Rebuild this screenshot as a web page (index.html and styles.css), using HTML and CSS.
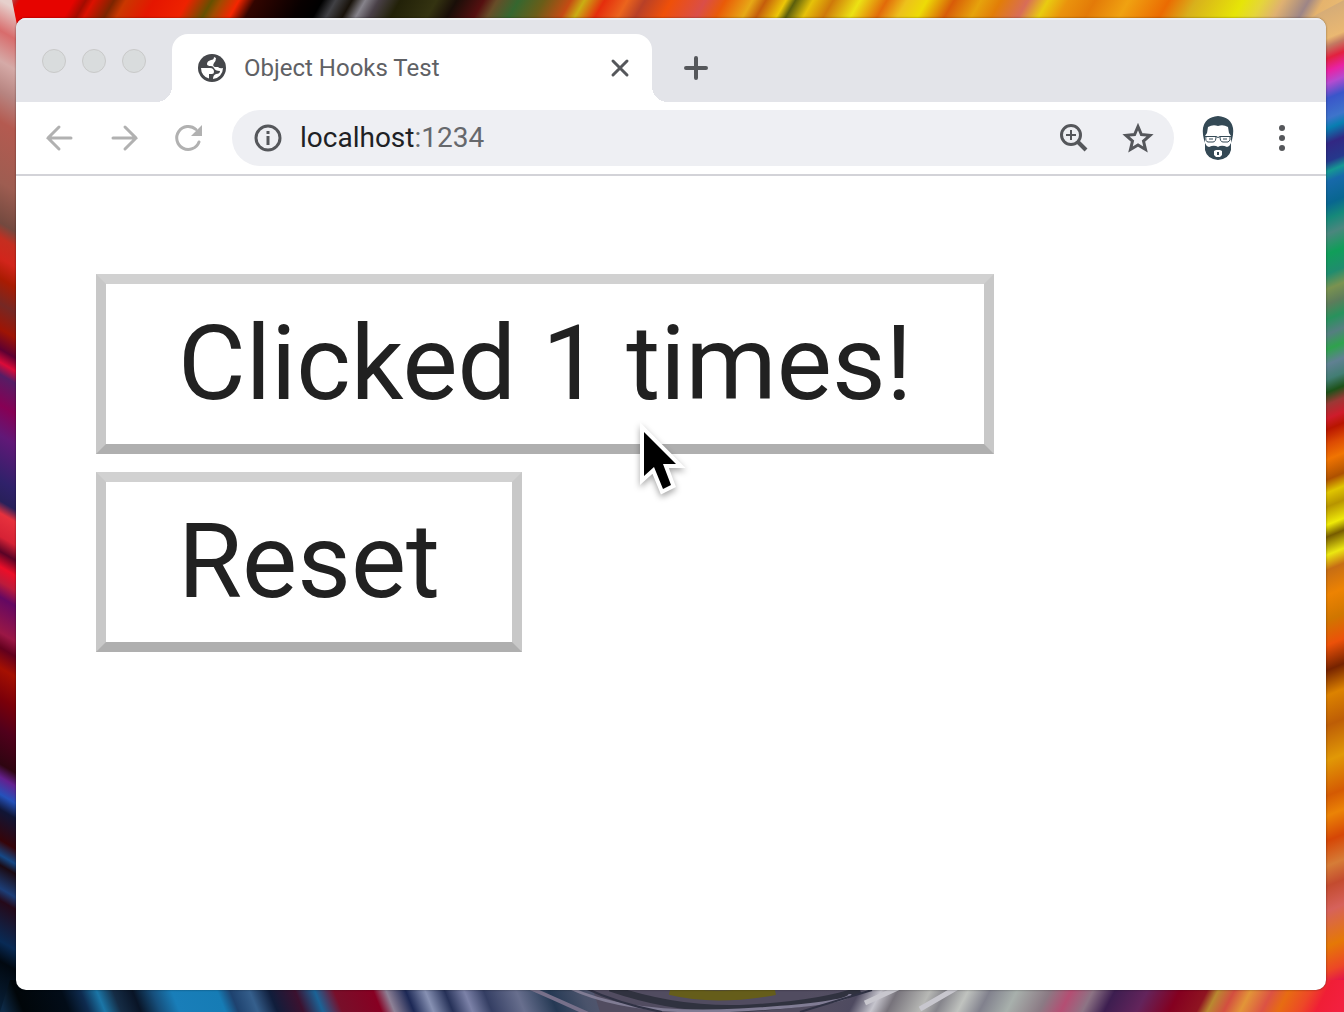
FILE: index.html
```html
<!DOCTYPE html>
<html lang="en">
<head>
<meta charset="utf-8">
<meta name="viewport" content="width=device-width, initial-scale=1">
<title>Object Hooks Test</title>
<link rel="stylesheet" href="styles.css">
</head>
<body>
<div class="desktop">
  <svg class="wallpaper" viewBox="0 0 1344 1012" preserveAspectRatio="none" aria-hidden="true">
    <defs>
      <linearGradient id="top" gradientUnits="userSpaceOnUse" x1="0" y1="0" x2="1008" y2="582">
        <stop offset="0" stop-color="#d8b5b5"/><stop offset=".012" stop-color="#c52020"/>
        <stop offset=".015" stop-color="#e60400"/><stop offset=".055" stop-color="#e60400"/>
        <stop offset=".064" stop-color="#a30c00"/><stop offset=".07" stop-color="#dc1100"/>
        <stop offset=".085" stop-color="#7c2500"/><stop offset=".094" stop-color="#ca3700"/>
        <stop offset=".115" stop-color="#e51600"/><stop offset=".14" stop-color="#ee2200"/>
        <stop offset=".158" stop-color="#655000"/><stop offset=".165" stop-color="#a04b00"/>
        <stop offset=".178" stop-color="#f52600"/><stop offset=".19" stop-color="#320500"/>
        <stop offset=".225" stop-color="#080000"/><stop offset=".24" stop-color="#000"/>
        <stop offset=".25" stop-color="#414145"/><stop offset=".262" stop-color="#18120a"/>
        <stop offset=".272" stop-color="#86838b"/><stop offset=".282" stop-color="#494047"/>
        <stop offset=".298" stop-color="#222108"/><stop offset=".325" stop-color="#343311"/>
        <stop offset=".34" stop-color="#190e08"/><stop offset=".36" stop-color="#551010"/>
        <stop offset=".37" stop-color="#674d28"/><stop offset=".386" stop-color="#35672f"/>
        <stop offset=".405" stop-color="#6b5d18"/><stop offset=".425" stop-color="#c64b13"/>
        <stop offset=".435" stop-color="#caae13"/><stop offset=".45" stop-color="#e52e0c"/>
        <stop offset=".467" stop-color="#eb641d"/><stop offset=".48" stop-color="#b84027"/>
        <stop offset=".5" stop-color="#ef5009"/><stop offset=".525" stop-color="#da4e48"/>
        <stop offset=".54" stop-color="#e95b08"/><stop offset=".56" stop-color="#e7a916"/>
        <stop offset=".57" stop-color="#c55d0b"/><stop offset=".585" stop-color="#edc708"/>
        <stop offset=".592" stop-color="#5b5e0c"/><stop offset=".605" stop-color="#e6c209"/>
        <stop offset=".62" stop-color="#cf790a"/><stop offset=".64" stop-color="#ece214"/>
        <stop offset=".66" stop-color="#e26a0a"/><stop offset=".675" stop-color="#edc11b"/>
        <stop offset=".69" stop-color="#eddb06"/><stop offset=".71" stop-color="#d85c08"/>
        <stop offset=".73" stop-color="#e6a30c"/><stop offset=".745" stop-color="#e27d08"/>
        <stop offset=".765" stop-color="#d86d58"/><stop offset=".78" stop-color="#e9cc10"/>
        <stop offset=".795" stop-color="#ea930d"/><stop offset=".815" stop-color="#e37a08"/>
        <stop offset=".84" stop-color="#f0a211"/><stop offset=".87" stop-color="#eb6b02"/>
        <stop offset=".89" stop-color="#d8b01c"/><stop offset=".925" stop-color="#e6e507"/>
        <stop offset=".94" stop-color="#e5d53b"/><stop offset=".955" stop-color="#dfb171"/>
        <stop offset=".974" stop-color="#9d8586"/><stop offset=".985" stop-color="#e5b36d"/>
        <stop offset="1" stop-color="#e8b972"/>
      </linearGradient>
      <linearGradient id="left" gradientUnits="userSpaceOnUse" x1="0" y1="0" x2="-438" y2="759">
        <stop offset="0" stop-color="#e6d0cc"/><stop offset=".03" stop-color="#d86c6c"/>
        <stop offset=".06" stop-color="#d5aaa7"/><stop offset=".09" stop-color="#b78480"/>
        <stop offset=".12" stop-color="#b45a50"/><stop offset=".18" stop-color="#9e5d51"/>
        <stop offset=".22" stop-color="#73493f"/><stop offset=".235" stop-color="#c52e20"/>
        <stop offset=".255" stop-color="#d2251b"/><stop offset=".275" stop-color="#a91b02"/>
        <stop offset=".3" stop-color="#752824"/><stop offset=".325" stop-color="#9f1404"/>
        <stop offset=".345" stop-color="#5d0032"/><stop offset=".358" stop-color="#db0b38"/>
        <stop offset=".37" stop-color="#551d65"/><stop offset=".4" stop-color="#870054"/>
        <stop offset=".43" stop-color="#611877"/><stop offset=".475" stop-color="#2f216a"/>
        <stop offset=".495" stop-color="#28205a"/><stop offset=".507" stop-color="#e7313d"/>
        <stop offset=".53" stop-color="#d62235"/><stop offset=".545" stop-color="#5a0326"/>
        <stop offset=".56" stop-color="#ec0e28"/><stop offset=".575" stop-color="#bd1b3b"/>
        <stop offset=".59" stop-color="#640862"/><stop offset=".625" stop-color="#9b1745"/>
        <stop offset=".64" stop-color="#62001d"/><stop offset=".66" stop-color="#a51002"/>
        <stop offset=".69" stop-color="#7b0009"/><stop offset=".72" stop-color="#51001b"/>
        <stop offset=".755" stop-color="#2e0511"/><stop offset=".768" stop-color="#64208f"/>
        <stop offset=".785" stop-color="#2452bb"/><stop offset=".8" stop-color="#101535"/>
        <stop offset=".83" stop-color="#360409"/><stop offset=".845" stop-color="#154886"/>
        <stop offset=".855" stop-color="#1b0a12"/><stop offset=".878" stop-color="#1c3e78"/>
        <stop offset=".89" stop-color="#250919"/><stop offset=".93" stop-color="#082a55"/>
        <stop offset=".95" stop-color="#010810"/><stop offset="1" stop-color="#08213a"/>
      </linearGradient>
      <linearGradient id="right" gradientUnits="userSpaceOnUse" x1="1335" y1="0" x2="1690" y2="856">
        <stop offset="0" stop-color="#d2aa78"/><stop offset=".035" stop-color="#eab872"/>
        <stop offset=".043" stop-color="#c37a62"/><stop offset=".055" stop-color="#e2213f"/>
        <stop offset=".068" stop-color="#e822a4"/><stop offset=".08" stop-color="#b44bd0"/>
        <stop offset=".095" stop-color="#3a55ca"/><stop offset=".115" stop-color="#3e74cb"/>
        <stop offset=".125" stop-color="#087eb1"/><stop offset=".14" stop-color="#322783"/>
        <stop offset=".158" stop-color="#25388c"/><stop offset=".168" stop-color="#159893"/>
        <stop offset=".178" stop-color="#1769aa"/><stop offset=".2" stop-color="#086690"/>
        <stop offset=".215" stop-color="#168979"/><stop offset=".23" stop-color="#4b867e"/>
        <stop offset=".25" stop-color="#109e59"/><stop offset=".27" stop-color="#208c6e"/>
        <stop offset=".285" stop-color="#7a9250"/><stop offset=".3" stop-color="#5d7c5b"/>
        <stop offset=".315" stop-color="#28925c"/><stop offset=".33" stop-color="#557e80"/>
        <stop offset=".345" stop-color="#2fa24d"/><stop offset=".36" stop-color="#608092"/>
        <stop offset=".375" stop-color="#427d73"/><stop offset=".388" stop-color="#1d5118"/>
        <stop offset=".4" stop-color="#9b3835"/><stop offset=".414" stop-color="#ce1c2b"/>
        <stop offset=".425" stop-color="#b81500"/><stop offset=".44" stop-color="#dc4b03"/>
        <stop offset=".455" stop-color="#f07402"/><stop offset=".475" stop-color="#ae5100"/>
        <stop offset=".488" stop-color="#e0c500"/><stop offset=".502" stop-color="#b79400"/>
        <stop offset=".52" stop-color="#efea08"/><stop offset=".532" stop-color="#775c00"/>
        <stop offset=".55" stop-color="#ece711"/><stop offset=".565" stop-color="#c66d14"/>
        <stop offset=".59" stop-color="#ed8302"/><stop offset=".615" stop-color="#d07600"/>
        <stop offset=".64" stop-color="#ec5109"/><stop offset=".665" stop-color="#762300"/>
        <stop offset=".69" stop-color="#dc8200"/><stop offset=".72" stop-color="#bd5d06"/>
        <stop offset=".755" stop-color="#e19806"/><stop offset=".79" stop-color="#d45a03"/>
        <stop offset=".81" stop-color="#eb8306"/><stop offset=".835" stop-color="#d54606"/>
        <stop offset=".86" stop-color="#d67c37"/><stop offset=".88" stop-color="#c34b2f"/>
        <stop offset=".905" stop-color="#d6625b"/><stop offset=".94" stop-color="#e57806"/>
        <stop offset=".965" stop-color="#ec4726"/><stop offset=".98" stop-color="#e3144a"/>
        <stop offset="1" stop-color="#f11d3e"/>
      </linearGradient>
      <linearGradient id="bottomLeft" gradientUnits="userSpaceOnUse" x1="0" y1="1001" x2="560" y2="776">
        <stop offset="0" stop-color="#0d2945"/><stop offset=".03" stop-color="#010609"/>
        <stop offset=".1" stop-color="#020c18"/><stop offset=".13" stop-color="#0e2b4f"/>
        <stop offset=".155" stop-color="#1b76a7"/><stop offset=".18" stop-color="#152c45"/>
        <stop offset=".21" stop-color="#091426"/><stop offset=".24" stop-color="#164f7c"/>
        <stop offset=".27" stop-color="#197eb9"/><stop offset=".34" stop-color="#167cb5"/>
        <stop offset=".36" stop-color="#1e426f"/><stop offset=".39" stop-color="#355f8c"/>
        <stop offset=".42" stop-color="#101d3b"/><stop offset=".46" stop-color="#3c112f"/>
        <stop offset=".49" stop-color="#1b6396"/><stop offset=".52" stop-color="#780f2a"/>
        <stop offset=".58" stop-color="#870022"/><stop offset=".6" stop-color="#8e8196"/>
        <stop offset=".63" stop-color="#1c2855"/><stop offset=".66" stop-color="#8791b3"/>
        <stop offset=".69" stop-color="#263158"/><stop offset=".72" stop-color="#7c82a8"/>
        <stop offset=".75" stop-color="#343e63"/><stop offset=".8" stop-color="#686f8e"/>
        <stop offset=".85" stop-color="#253954"/><stop offset=".9" stop-color="#4a536b"/>
        <stop offset="1" stop-color="#685c75"/>
      </linearGradient>
      <linearGradient id="bottomRight" gradientUnits="userSpaceOnUse" x1="800" y1="1001" x2="1228" y2="1223">
        <stop offset="0" stop-color="#565263" stop-opacity="0"/><stop offset=".1" stop-color="#4e4a60"/>
        <stop offset=".14" stop-color="#c6c5cd"/><stop offset=".17" stop-color="#77737b"/>
        <stop offset=".23" stop-color="#b7b8b5"/><stop offset=".26" stop-color="#85848b"/>
        <stop offset=".3" stop-color="#c0c3bf"/><stop offset=".34" stop-color="#81818d"/>
        <stop offset=".39" stop-color="#a8b0ac"/><stop offset=".45" stop-color="#8b7a84"/>
        <stop offset=".49" stop-color="#b44e73"/><stop offset=".53" stop-color="#8d7485"/>
        <stop offset=".57" stop-color="#3d1e50"/><stop offset=".63" stop-color="#63245b"/>
        <stop offset=".69" stop-color="#840020"/><stop offset=".74" stop-color="#8f1421"/>
        <stop offset=".76" stop-color="#b98930"/><stop offset=".79" stop-color="#d34e40"/>
        <stop offset=".82" stop-color="#e29538"/><stop offset=".86" stop-color="#dc5244"/>
        <stop offset=".89" stop-color="#e76c12"/><stop offset=".93" stop-color="#ed4827"/>
        <stop offset=".96" stop-color="#f01e36"/><stop offset="1" stop-color="#f3203f"/>
      </linearGradient>
    </defs>
    <path fill="url(#top)" d="M0 0h1344v40H0z"/>
    <path fill="url(#left)" d="M0 0h12l8 40v972H0z"/>
    <path fill="url(#right)" d="M1310 18l34-18v1012h-34z"/>
    <path fill="url(#bottomLeft)" d="M10 980h590v32H0z"/>
    <path fill="#514c60" d="M590 980h370v32H600z"/>
    <path fill="url(#bottomRight)" d="M800 980h544v32H800z"/>
    <g fill="none">
      <path stroke="#30323f" stroke-width="7" d="M610 988q70 24 140 20t110-18"/>
      <path stroke="#807c94" stroke-width="3" d="M570 988q60 28 170 22t110-16"/>
      <path stroke="#655d1a" stroke-width="10" d="M670 990q45 11 105 0"/>
      <path stroke="#77708a" stroke-width="4" d="M530 988q32 14 65 29"/>
      <path stroke="#303244" stroke-width="2" d="M585 988q34 16 77 24M800 1012l72-22"/>
      <path stroke="#c8c7ce" stroke-width="5" d="M865 1003l35-16M920 1009l38-22"/>
    </g>
  </svg>

  <div class="window">
    <header class="tab-strip">
      <div class="window-controls">
        <button class="window-dot" aria-label="Close window"></button>
        <button class="window-dot" aria-label="Minimize window"></button>
        <button class="window-dot" aria-label="Zoom window"></button>
      </div>
      <div class="tab">
        <svg class="favicon" viewBox="0 0 28 28" aria-hidden="true">
          <circle cx="14" cy="14" r="14" fill="#45474b"/>
          <path fill="#fff" d="M3 14h9q4 0 4 4 0 2-2 2h-3v4.600A11 11 0 0 1 3 14zM16 3q0 3-3 3-4 1-4 4 0 2 4 2 2 0 3 2 1 3 6 3 0 3-4 3-3 1-3 5A11 11 0 0 0 25 14q-3 1-5-1h-3q-3-1-1-4 2-2 2-5z"/>
        </svg>
        <span class="tab-title">Object Hooks Test</span>
        <button class="plain-button tab-close" aria-label="Close tab">
          <svg viewBox="0 0 20 20"><path class="stroke" d="M3 3l14 14M17 3L3 17"/></svg>
        </button>
      </div>
      <button class="plain-button new-tab" aria-label="New tab">
        <svg viewBox="0 0 26 26"><path class="stroke thick" d="M13 3v20M3 13h20"/></svg>
      </button>
    </header>

    <nav class="toolbar" aria-label="Browser toolbar">
      <button class="plain-button tool muted" aria-label="Back">
        <svg viewBox="0 0 32 32"><path class="stroke" d="M27 16H4M15 5L4 16l11 11"/></svg>
      </button>
      <button class="plain-button tool muted" aria-label="Forward">
        <svg viewBox="0 0 32 32"><path class="stroke" d="M5 16h23M17 5l11 11-11 11"/></svg>
      </button>
      <button class="plain-button tool muted" aria-label="Reload">
        <svg viewBox="0 0 32 32"><path class="stroke" d="M27 20a11.500 11.500 0 1 1-3-12.500"/><path fill="currentColor" d="M30 3v11H19z"/></svg>
      </button>
      <div class="address">
        <svg class="info" viewBox="0 0 28 28" aria-hidden="true"><circle class="stroke" cx="14" cy="14" r="12"/><path fill="currentColor" d="M12.500 7h3v3h-3zM12.500 12h3v9h-3z"/></svg>
        <a class="url" href="http://localhost:1234">localhost<span class="port">:1234</span></a>
        <button class="plain-button tool" aria-label="Page zoom">
          <svg viewBox="0 0 32 32"><circle class="stroke" cx="13" cy="13" r="9.500"/><path class="stroke thick" d="M20 20l8 8"/><path class="stroke thin" d="M13 8v10M8 13h10"/></svg>
        </button>
        <button class="plain-button tool" aria-label="Bookmark this page">
          <svg viewBox="0 0 32 32"><path class="stroke" d="M16 4.500l3.400 8 8.600.8-6.500 5.700 2 8.500-7.500-4.500-7.500 4.500 2-8.500L4 13.300l8.600-.8z"/></svg>
        </button>
      </div>
      <button class="plain-button avatar" aria-label="Profile">
        <svg viewBox="0 0 32 44">
          <path fill="#344955" d="M3 27Q0 18 1 12 3 1 16 0q13 1 15 12 1 6-2 15v7q-2 9-13 10-11-1-13-10z"/>
          <path fill="#fff" d="M6 11q5-3 10-1 5-2 10 1l1 6 2 3v7q-1 3-4 4-4-2-7-1l-2 1-2-1q-3-1-7 1-3-1-4-4v-7l2-3z"/>
          <path fill="none" stroke="#344955" d="M3 20.500h11l2 1 2-1h11M4 20.500q-1 5 2 5.500h5q3 0 3-5.500M18 20.500q0 5.500 3 5.500h5q3-1 2-5.500M7 23h4m10 0h4"/>
          <path fill="#344955" d="M8 34q4-4 8-3 4-1 8 3l-3 3H11z"/>
          <path fill="#fff" d="M14 34h4l2 1v4l-2 2h-4l-2-2v-4z"/><path fill="#344955" d="M15 36h2v3h-2z"/>
        </svg>
      </button>
      <button class="plain-button tool" aria-label="More options">
        <svg viewBox="0 0 32 32"><g fill="currentColor"><circle cx="16" cy="6" r="3"/><circle cx="16" cy="16" r="3"/><circle cx="16" cy="26" r="3"/></g></svg>
      </button>
    </nav>

    <main class="page">
      <button class="counter-button">Clicked 1 times!</button>
      <button class="counter-button">Reset</button>
    </main>
  </div>

  <svg class="pointer" viewBox="0 0 56 80" aria-hidden="true">
    <path class="pointer-shape" d="M12 9v44l10-9 9 22 8-4-8-21h13z"/>
  </svg>
</div>
</body>
</html>
```

FILE: styles.css
```css
* { box-sizing: border-box; }

body {
  margin: 0;
  font-family: Roboto, "Liberation Sans", sans-serif;
  color: #212121;
}

.desktop {
  position: relative;
  display: flex;
  min-height: 100vh;
  padding: 18px 18px 22px 16px;
  overflow: hidden;
}

.wallpaper {
  position: absolute;
  inset: 0;
  width: 100%;
  height: 100%;
}

.window {
  position: relative;
  flex: 1;
  display: flex;
  flex-direction: column;
  overflow: hidden;
  border-radius: 10px;
  background: #fff;
  box-shadow: 0 0 2px rgba(0, 0, 0, .5);
}

.plain-button {
  display: flex;
  padding: 0;
  border: 0;
  background: none;
  color: #55575b;
}

.plain-button svg { width: 100%; height: 100%; }

.stroke { fill: none; stroke: currentColor; stroke-width: 3; }
.tab-strip .stroke { stroke-linecap: round; }
.thick { stroke-width: 4; }
.thin { stroke-width: 2; }

.tab-strip {
  display: flex;
  align-items: flex-end;
  height: 84px;
  background: #e3e4e9;
  box-shadow: inset 0 2px #eff0f3;
}

.window-controls {
  display: flex;
  align-self: center;
  gap: 16px;
  width: 156px;
  padding: 2px 0 0 26px;
}

.window-dot {
  width: 24px;
  height: 24px;
  padding: 0;
  border: 1px solid #c9c9c9;
  border-radius: 50%;
  background: #d9dcdd;
}

.tab {
  position: relative;
  display: flex;
  align-items: center;
  width: 480px;
  height: 68px;
  padding: 0 22px 0 26px;
  border-radius: 16px 16px 0 0;
  background: #fff;
}

.tab::before,
.tab::after {
  content: "";
  position: absolute;
  bottom: 0;
  width: 16px;
  height: 16px;
}

.tab::before {
  right: 100%;
  background: radial-gradient(circle at 0 0, transparent 16px, #fff 16px);
}

.tab::after {
  left: 100%;
  background: radial-gradient(circle at 100% 0, transparent 16px, #fff 16px);
}

.favicon { width: 28px; height: 28px; }

.tab-title {
  flex: 1;
  margin-left: 18px;
  font-size: 24px;
  line-height: 32px;
  color: #5f6165;
}

.tab-close { width: 20px; height: 20px; }
.new-tab { align-self: center; width: 26px; height: 26px; margin: 16px 0 0 31px; }

.toolbar {
  display: flex;
  align-items: center;
  height: 74px;
  padding: 0 28px;
  border-bottom: 2px solid #d3d3d8;
}

.tool { flex: none; width: 32px; height: 32px; }
.muted { color: #b1b1b1; margin-right: 32px; }
.muted .stroke { stroke-linecap: round; }

.address {
  flex: 1;
  display: flex;
  align-items: center;
  gap: 32px;
  height: 56px;
  margin-left: -4px;
  padding: 0 20px 0 22px;
  border-radius: 28px;
  background: #eeeff3;
}

.info { width: 28px; height: 28px; color: #55575b; }

.url {
  flex: 1;
  margin-left: -14px;
  font-size: 28px;
  line-height: 36px;
  color: #202124;
  text-decoration: none;
}

.port { color: #66686c; }

.avatar { width: 32px; height: 44px; margin: 0 32px 0 28px; }

.page {
  flex: 1;
  display: flex;
  flex-direction: column;
  align-items: flex-start;
  gap: 18px;
  padding: 98px 80px;
}

.counter-button {
  height: 180px;
  padding: 0 72px;
  border: 10px solid;
  border-color: #d1d1d1 #c8c8c8 #afafaf;
  background: #fff;
  font-family: inherit;
  font-size: 104px;
  line-height: 130px;
  color: #212121;
}

.pointer {
  position: absolute;
  top: 423px;
  left: 632px;
  width: 56px;
  height: 80px;
  overflow: visible;
  filter: drop-shadow(0 3px 3px rgba(0, 0, 0, .35));
}

.pointer-shape {
  fill: #000;
  stroke: #fff;
  stroke-width: 8;
  paint-order: stroke;
}
```
